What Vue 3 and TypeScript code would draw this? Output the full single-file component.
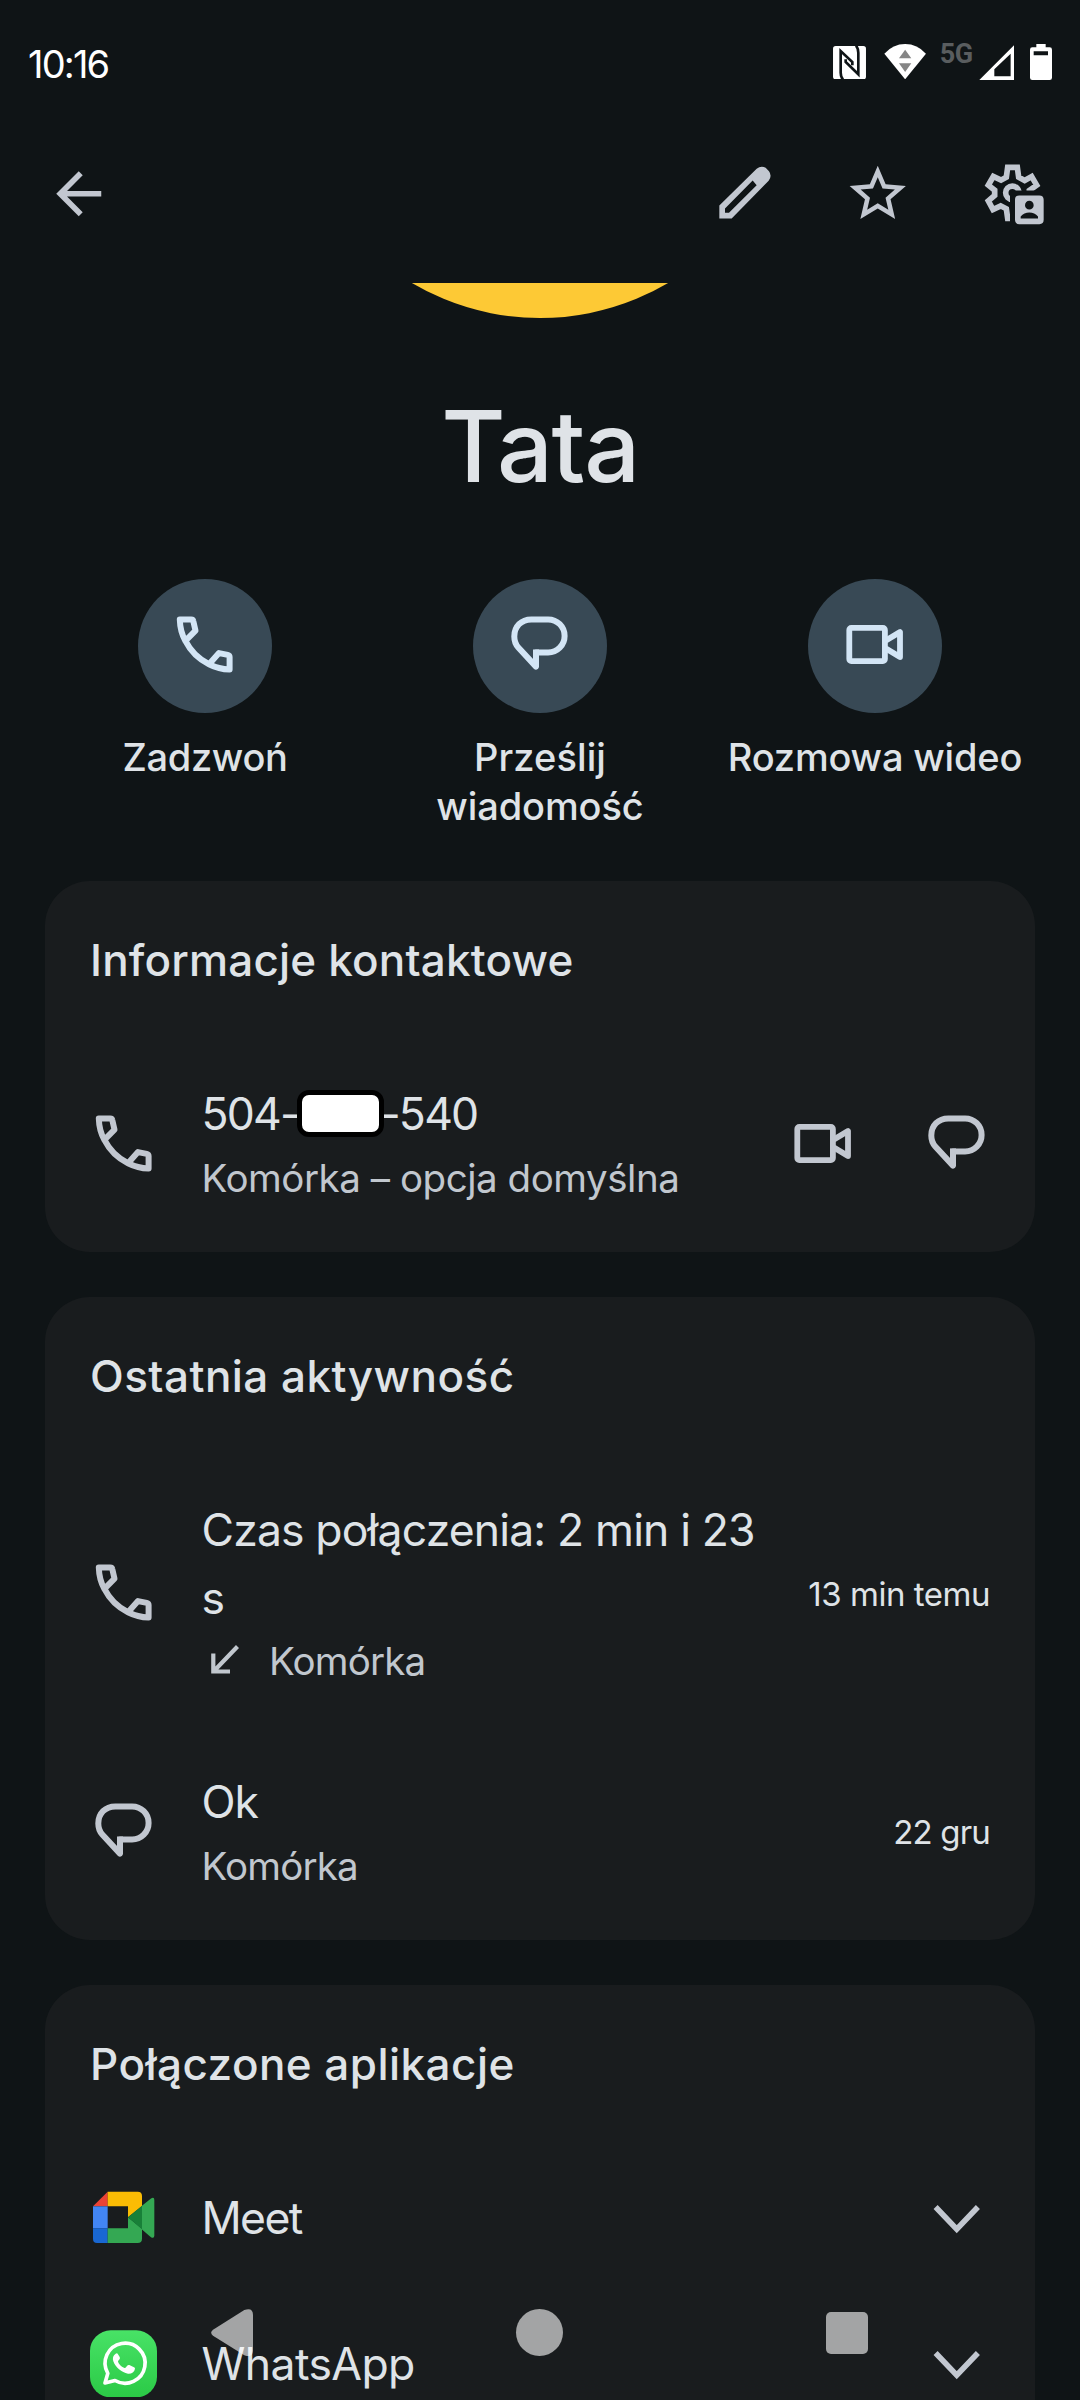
<script setup lang="ts">
interface Action {
  icon: 'phone' | 'message' | 'video'
  lines: { text: string; spacing: number }[]
}

const actions: Action[] = [
  { icon: 'phone', lines: [{ text: 'Zadzwoń', spacing: -0.31 }] },
  { icon: 'message', lines: [{ text: 'Prześlij', spacing: 0.1 }, { text: 'wiadomość', spacing: -0.1 }] },
  { icon: 'video', lines: [{ text: 'Rozmowa wideo', spacing: -0.18 }] },
]
</script>

<template>
  <div class="phone">
    <svg width="0" height="0" class="defs" aria-hidden="true">
      <symbol id="phone" viewBox="0 0 67.5 67.5">
        <path transform="translate(5.8 4.5)" fill="none" stroke="currentColor" stroke-width="6" stroke-linejoin="round"
          d="M3 3H14.5Q16.2 3 16.5 4.6L18.7 14.2L8.6 24.4C4.6 17.5 3.2 10.5 3 3ZM8.6 24.4C13.5 34 21.5 42.5 32.2 47.7L42.2 36.6L51 38.4Q52.8 38.8 52.8 40.5V53C45.5 52.8 38.7 51 32.2 47.7" />
      </symbol>
      <symbol id="message" viewBox="0 0 67.5 67.5">
        <path transform="translate(5.3 4.4)" fill="none" stroke="currentColor" stroke-width="6" stroke-linejoin="round"
          d="M24.7 36H36.8A16.5 16.5 0 0 0 36.8 3H20C10 3 3 10.2 3 20C3 24.5 4.3 28 7 31L24.7 50.2Z" />
        <path transform="translate(5.3 4.4)" fill="currentColor" d="M21.7 33h6v6h-6z" />
      </symbol>
      <symbol id="video" viewBox="0 0 67.5 67.5">
        <g transform="translate(5.4 13)" fill="none" stroke="currentColor" stroke-width="5.8" stroke-linejoin="round">
          <rect x="2.9" y="2.9" width="35.6" height="33.2" rx="2" />
          <path d="M39.5 15.6L53.6 7V32L39.5 23.4" />
        </g>
      </symbol>
      <symbol id="chevron" viewBox="0 0 67.5 67.5">
        <path d="M12.6 23L33.75 45.2L54.9 23" fill="none" stroke="currentColor" stroke-width="5.6" />
      </symbol>
    </svg>

    <header class="status">
      <span class="time">10:16</span>
      <div class="status-icons">
        <svg class="nfc" viewBox="0 0 99 100">
          <rect width="99" height="100" rx="8" fill="#fff" />
          <path d="M30 101Q23 93 23 80V15L58 48V58" fill="none" stroke="#0f1416" stroke-width="8" />
          <path d="M69 -1Q76 7 76 20V85L38 48V40" fill="none" stroke="#0f1416" stroke-width="8" />
        </svg>
        <svg class="wifi" viewBox="0 0 127 106">
          <path d="M1 29Q27 0 63.500 0T126 29L63.500 106Z" fill="#fff" />
          <path d="M63.500 17L82 43H45ZM63.500 84L45 58H82Z" fill="#858585" />
        </svg>
        <span class="net">5G</span>
        <svg class="signal" viewBox="0 0 106 106">
          <path fill-rule="evenodd" d="M106 0V106H0ZM95 26L46 73V94H95Z" fill="#fff" />
        </svg>
        <svg class="battery" viewBox="0 0 66 108">
          <path fill-rule="evenodd" d="M19 0H47V10H59Q66 10 66 17V101Q66 108 59 108H7Q0 108 0 101V17Q0 10 7 10H19ZM11 22V34H54V22Z" fill="#fff" />
        </svg>
      </div>
    </header>

    <nav class="appbar">
      <svg class="icon back" viewBox="0 0 24 24">
        <path d="M20 11H7.830L13.420 5.410 12 4 4 12 12 20 13.410 18.590 7.830 13H20Z" fill="currentColor" />
      </svg>
      <svg class="icon" viewBox="213 481.5 202.5 202.500">
        <path fill="currentColor" fill-rule="evenodd"
          d="M238 657V618L350 508Q363 497 377 505L387 515Q397 529 386 544L275 657ZM255 640H267L350 557L338 543L255 627Z" />
      </svg>
      <svg class="icon" viewBox="0 0 24 24">
        <path fill="currentColor" d="M22 9.240l-7.190-.620L12 2 9.190 8.630 2 9.240l5.460 4.730L5.820 21 12 17.270 18.180 21l-1.630-7.030zM12 15.400l-3.760 2.270 1-4.280-3.320-2.880 4.380-.380L12 6.100l1.710 4.040 4.380.380-3.320 2.880 1 4.280z" />
      </svg>
      <svg class="icon" viewBox="1014 481.5 202.5 202.5">
        <defs>
          <clipPath id="gear-cut"><path d="M1014 480H1216V573H1110V684H1014Z" /></clipPath>
        </defs>
        <g clip-path="url(#gear-cut)" fill="none" stroke="currentColor" stroke-width="17">
          <path d="M1103 503.500H1132L1136 533L1154 543L1175 531L1190 557L1168 573V588L1190 604L1175 630L1153 621L1136 632L1132 657H1103L1099 628L1082 619L1059 630L1045 604L1064 588V572L1045 557L1060 531L1083 542L1099 533Z" />
          <circle cx="1117" cy="580" r="20" />
        </g>
        <path fill="currentColor" fill-rule="evenodd"
          d="M1138 588H1198Q1211 588 1211 601V661Q1211 674 1198 674H1138Q1125 674 1125 661V601Q1125 588 1138 588ZM1168 604A13 13 0 1 0 1168 630A13 13 0 1 0 1168 604ZM1142 657H1194V651Q1184 639 1168 639T1142 651Z" />
      </svg>
    </nav>

    <div class="avatar-clip"><div class="avatar"></div></div>
    <h1 class="name">Tata</h1>

    <section class="actions">
      <div v-for="action in actions" :key="action.icon" class="action">
        <div class="bubble">
          <svg class="icon"><use :href="'#' + action.icon" /></svg>
        </div>
        <div class="action-label">
          <span v-for="line in action.lines" :key="line.text" :style="{ letterSpacing: line.spacing + 'px' }">{{ line.text }}</span>
        </div>
      </div>
    </section>

    <main class="cards">
      <section class="card contact">
        <h2 class="t-contact">Informacje kontaktowe</h2>
        <div class="row">
          <svg class="icon"><use href="#phone" /></svg>
          <div class="text">
            <div class="primary number"><span>504-</span><i class="mask"></i><span>-540</span></div>
            <div class="secondary long">Komórka – opcja domyślna</div>
          </div>
          <svg class="icon"><use href="#video" /></svg>
          <svg class="icon last"><use href="#message" /></svg>
        </div>
      </section>

      <section class="card activity">
        <h2>Ostatnia aktywność</h2>
        <div class="row">
          <svg class="icon"><use href="#phone" /></svg>
          <div class="text">
            <div class="primary">Czas połączenia: 2 min i 23<br />s</div>
            <div class="secondary incoming">
              <svg viewBox="0 0 45 45"><path d="M35.500 7.500L12 32M11.300 14.500V32.500H28" fill="none" stroke="currentColor" stroke-width="4.200" /></svg>
              <span>Komórka</span>
            </div>
          </div>
          <span class="when">13 min temu</span>
        </div>
        <div class="row">
          <svg class="icon"><use href="#message" /></svg>
          <div class="text">
            <div class="primary ok">Ok</div>
            <div class="secondary">Komórka</div>
          </div>
          <span class="when short">22 gru</span>
        </div>
      </section>

      <section class="card apps">
        <h2>Połączone aplikacje</h2>
        <div class="app">
          <svg class="icon" viewBox="180 132 202.5 202.5">
            <path fill="#ea4335" d="M189 199L233 155V199Z" />
            <path fill="#4285f4" d="M189 199H233V265H189Z" />
            <path fill="#1967d2" d="M189 265H233V309H201Q189 309 189 297Z" />
            <path fill="#fbbc04" d="M233 155H323Q336 155 336 168V198L294 232V199H233Z" />
            <path fill="#34a853" d="M233 265H294V232L336 266V296Q336 309 323 309H233Z" />
            <path fill="#34a853" d="M335 198L362 176Q373 169 373 180V286Q373 298 362 291L335 268Z" />
            <path fill="#188038" d="M294 232L336 197V268Z" />
          </svg>
          <div class="primary meet">Meet</div>
          <svg class="icon"><use href="#chevron" /></svg>
        </div>
        <div class="app">
          <svg class="icon" viewBox="180 569 202.5 202.5">
            <defs>
              <linearGradient id="wa" x1="0" y1="0" x2="0" y2="1">
                <stop offset="0" stop-color="#48e266" />
                <stop offset="1" stop-color="#2bca46" />
              </linearGradient>
            </defs>
            <rect x="180" y="570" width="201" height="201" rx="62" fill="url(#wa)" />
            <path d="M225 728L233.500 699A60 60 0 1 1 255 720.500Z" fill="none" stroke="#fff" stroke-width="11" stroke-linejoin="round" />
            <path fill="#fff" d="M257 640C249 645 247 654 250 663C256 681 275 697 294 700C304 701 313 696 315 685C315 683 314 682 312 681L298 674C295 673 293 674 291 677C287 682 286 684 282 682C274 679 266 670 264 664C264 661 267 659 269 656C270 654 270 653 269 650L263 640C262 638 259 638 257 640Z" />
          </svg>
          <div class="primary whatsapp">WhatsApp</div>
          <svg class="icon"><use href="#chevron" /></svg>
        </div>
      </section>
    </main>

    <footer class="navbar">
      <svg class="nav-back" viewBox="0 0 126 142"><path d="M6 62L100 3Q126 -6 126 18V124Q126 148 100 139L6 80Q-5 71 6 62Z" fill="currentColor" /></svg>
      <span class="nav-home"></span>
      <span class="nav-recent"></span>
    </footer>
  </div>
</template>

<style scoped>
.phone {
  position: relative;
  display: flex;
  flex-direction: column;
  width: 1080px;
  height: 2400px;
  overflow: hidden;
  background: #0f1416;
  color: #dfe3e7;
  font-family: Inter, Roboto, sans-serif;
}
.defs { position: absolute; }
h1, h2 { margin: 0; font-weight: 500; }
.icon { flex: none; width: 67.5px; height: 67.5px; color: #c2c7d0; }

.status {
  flex: none;
  display: flex;
  align-items: center;
  justify-content: space-between;
  height: 129px;
  padding: 0 28px 0 28px;
  box-sizing: border-box;
  color: #fff;
}
.time { margin-bottom: 2px; font-size: 38px; letter-spacing: -1.83px; }
.status-icons { display: flex; align-items: flex-start; height: 41px; }
.nfc { width: 33px; height: 33.300px; margin: 2px 18px 0 0; }
.wifi { width: 42.300px; height: 35.300px; margin-right: 13px; }
.net { width: 39px; color: #595d5f; font: 700 27px/20px Roboto, sans-serif; letter-spacing: -0.5px; }
.signal { width: 35.300px; height: 35.300px; margin: 1px 16px 0 0; }
.battery { width: 22px; height: 36px; }

.appbar {
  flex: none;
  display: flex;
  gap: 66px;
  height: 154px;
  padding: 31px 35px 0 45px;
  box-sizing: border-box;
}
.back { margin-right: auto; }

.avatar-clip {
  flex: none;
  display: flex;
  justify-content: center;
  align-items: flex-end;
  height: 35px;
  padding-right: 1px;
  overflow: hidden;
}
.avatar { flex: none; width: 504px; height: 504px; border-radius: 50%; background: #fdc935; }

.name {
  flex: none;
  margin-top: 68px;
  font-size: 98.600px;
  line-height: 120px;
  letter-spacing: -1.390px;
  text-align: center;
}

.actions { flex: none; display: flex; height: 301px; padding: 73px 37.500px 0; box-sizing: border-box; }
.action { display: flex; flex-direction: column; align-items: center; width: 335px; }
.bubble {
  flex: none;
  display: flex;
  align-items: center;
  justify-content: center;
  width: 134px;
  height: 134px;
  border-radius: 50%;
  background: #384955;
}
.bubble .icon { color: #d3e5f5; }
.action-label {
  display: flex;
  flex-direction: column;
  align-items: center;
  margin-top: 20px;
  font-size: 38px;
  font-weight: 500;
  line-height: 49px;
  white-space: nowrap;
}

.cards { flex: none; display: flex; flex-direction: column; gap: 45px; margin-top: 74px; padding: 0 45px; }
.card { padding: 49px 45px 0; box-sizing: border-box; border-radius: 45px; background: #191c1e; }
.contact { height: 371px; }
.activity { height: 643px; }
.apps { height: 500px; }
h2 { font-size: 44px; line-height: 60px; letter-spacing: 0.460px; white-space: nowrap; }
.t-contact { letter-spacing: 0.180px; }
h2 + .row { margin-top: 52px; }
.row { display: flex; align-items: center; padding: 38px 0; }
.text { flex: 1; margin-left: 44px; white-space: nowrap; }
.primary { font-size: 44.500px; line-height: 67.500px; letter-spacing: -0.840px; }
.text .primary { padding-top: 1px; margin-bottom: -1px; }
.secondary { font-size: 38.500px; line-height: 61px; letter-spacing: -0.830px; color: #c1c7ce; }
.long { letter-spacing: -0.460px; }
.ok { letter-spacing: -1px; }
.number { display: flex; align-items: center; letter-spacing: -1.790px; }
.mask {
  position: relative;
  width: 87px;
  height: 47px;
  margin: -3px -4px 0 -1.500px;
  box-sizing: border-box;
  border: 5px solid #000;
  border-radius: 12px;
  background: #fff;
}
.last { margin-left: 66px; }
.incoming { display: flex; align-items: center; gap: 22.500px; }
.incoming svg { width: 45px; height: 45px; }
.when { font-size: 33px; letter-spacing: -0.470px; }
.short { letter-spacing: -0.840px; }

.app { display: flex; align-items: center; height: 145.800px; }
h2 + .app { margin-top: 51px; }
.app .primary { flex: 1; margin-left: 44px; padding-top: 2px; }
.app .meet { letter-spacing: -1.600px; }
.app .whatsapp { letter-spacing: -0.590px; }

.navbar {
  position: absolute;
  left: 0;
  right: 0;
  bottom: 0;
  display: flex;
  align-items: center;
  justify-content: space-between;
  height: 135px;
  padding: 0 212px 0 211px;
  color: #fff;
  opacity: 0.6;
}
.nav-back { width: 42px; height: 47.300px; }
.nav-home { width: 47px; height: 47px; border-radius: 50%; background: currentColor; }
.nav-recent { width: 42px; height: 42px; border-radius: 5px; background: currentColor; }
</style>

<style>
body { background: #0f1416; }
</style>
